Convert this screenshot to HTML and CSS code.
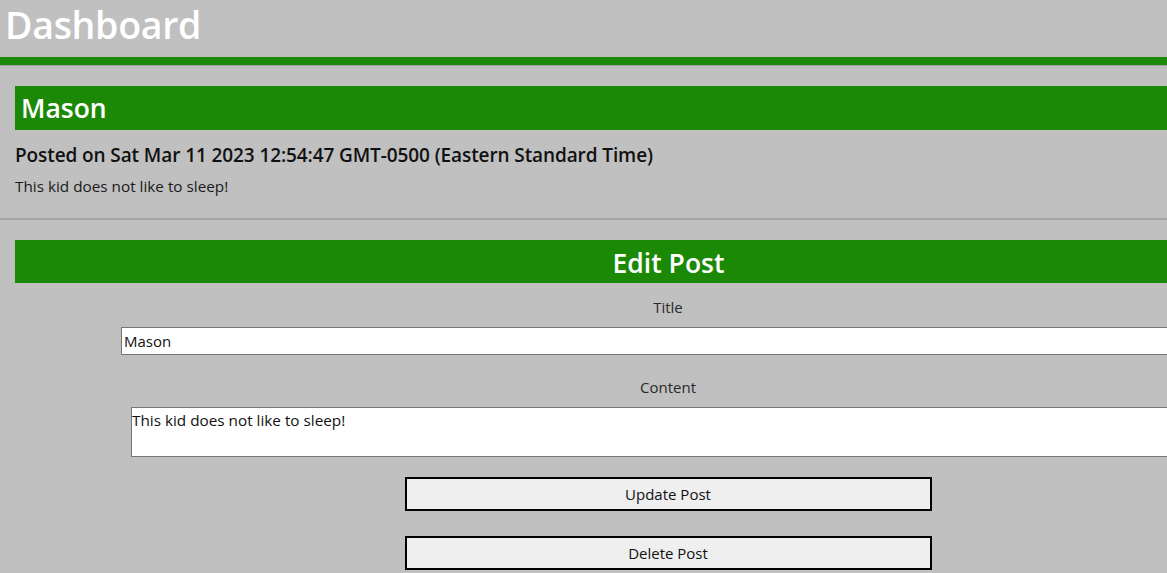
FILE: index.html
```html
<!DOCTYPE html>
<html>
<head>
<meta charset="utf-8">
<link rel="stylesheet" href="styles.css">
</head>
<body>
<header class="top">
  <h1 class="brand">Dashboard</h1>
</header>
<section class="post">
  <div class="post-bar"><h2 class="post-title">Mason</h2></div>
  <h3 class="post-date">Posted on Sat Mar 11 2023 12:54:47 GMT-0500 (Eastern Standard Time)</h3>
  <p class="post-body">This kid does not like to sleep!</p>
</section>
<hr class="divider">
<section class="edit">
  <div class="edit-bar"><h2 class="edit-title">Edit Post</h2></div>
  <form class="edit-form">
    <label class="field-label" for="title">Title</label>
    <input class="title-input" id="title" type="text" value="Mason">
    <label class="field-label" for="content">Content</label>
    <textarea class="content-input" id="content">This kid does not like to sleep!</textarea>
    <button class="btn" type="button">Update Post</button>
    <button class="btn" type="button">Delete Post</button>
  </form>
</section>
</body>
</html>
```
FILE: styles.css
```css
html, body {
  margin: 0;
  padding: 0;
  overflow: hidden;
}
body {
  background: #c0c0c0;
  font-family: "Open Sans", "Noto Sans", sans-serif;
  color: #1a1a1a;
  width: 1167px;
  height: 573px;
}
.top {
  height: 57px;
  border-bottom: 8px solid #1b8906;
  box-shadow: 0 1px 0 #a4a4a4;
  padding-left: 5px;
}
.brand {
  margin: 0;
  font-size: 37.5px;
  line-height: 50px;
  font-weight: 600;
  color: #fff;
  letter-spacing: -0.3px;
}
.post {
  padding: 21px 0 0 15px;
  width: 1308px;
}
.post-bar {
  background: #1b8906;
  height: 44px;
  display: flex;
  align-items: center;
  padding-left: 6px;
}
.post-title {
  margin: 0;
  font-size: 26.5px;
  font-weight: 600;
  color: #fff;
  line-height: 1;
}
.post-date {
  margin: 12px 0 0 0;
  font-size: 19px;
  font-weight: 600;
  line-height: 26px;
  color: #111;
  letter-spacing: -0.1px;
}
.post-body {
  margin: 8px 0 0 0;
  font-size: 15.3px;
  line-height: 21px;
  color: #1a1a1a;
}
.divider {
  margin: 21px 0 0 0;
  border: 0;
  height: 2px;
  background: #a6a6a6;
}
.edit {
  padding: 20px 0 0 14px;
  width: 1308px;
}
.edit-bar {
  box-sizing: border-box;
  background: #1b8906;
  height: 43px;
  margin-left: 1px;
  padding-top: 3px;
  display: flex;
  align-items: center;
  justify-content: center;
}
.edit-title {
  margin: 0;
  font-size: 26.5px;
  font-weight: 600;
  color: #fff;
  line-height: 1;
}
.edit-form {
  display: flex;
  flex-direction: column;
  align-items: center;
}
.field-label {
  display: block;
  font-size: 15px;
  line-height: 20px;
  color: #2a2a2a;
  margin-top: 14px;
  height: 30px;
}
.title-input {
  box-sizing: border-box;
  width: 1094px;
  height: 28px;
  margin: 0 0 8px 0;
  border: 1px solid #767676;
  background: #fff;
  font-family: "Open Sans", sans-serif;
  font-size: 15px;
  color: #111;
  padding: 0 2px;
}
.content-input {
  box-sizing: border-box;
  width: 1074px;
  height: 50px;
  margin: 0 0 20px 0;
  border: 1px solid #767676;
  background: #fff;
  font-family: "Open Sans", sans-serif;
  font-size: 15.3px;
  color: #111;
  padding: 2px 0 0 0;
  resize: none;
}
.btn {
  box-sizing: border-box;
  width: 527px;
  height: 34px;
  border: 2px solid #000;
  background: #efefef;
  font-family: "Open Sans", sans-serif;
  font-size: 15px;
  color: #111;
  margin-bottom: 25px;
  padding: 0;
}
```
